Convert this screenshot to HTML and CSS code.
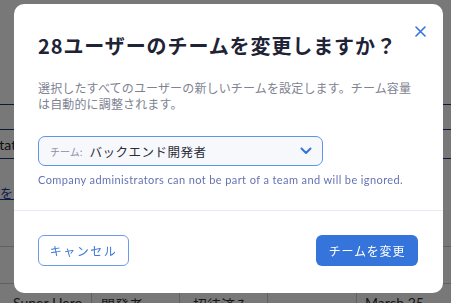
FILE: index.html
```html
<!DOCTYPE html>
<html>

<head>
    <meta charset="utf-8">
    <link rel="stylesheet" href="styles.css">
</head>

<body>
    <div class="page">
        <div class="toolbar"></div>
        <div class="bar"></div>
        <div class="thead">
            <span class="th">Status</span>
        </div>
        <div class="link-row">
            <a class="link">をすべて選択</a>
        </div>
        <div class="trow"></div>
        <div class="trow"></div>
        <div class="trow last">
            <span class="td c1">Super Hero</span>
            <span class="td c2">開発者</span>
            <span class="td c3">招待済み</span>
            <span class="td c4"></span>
            <span class="td c5">March 25</span>
        </div>
    </div>

    <div class="overlay"></div>

    <div class="modal">
        <button class="close" aria-label="close">
            <svg width="11" height="11" viewBox="0 0 11 11">
                <path d="M1 1 L10 10 M10 1 L1 10" stroke="#3574db" stroke-width="1.6" stroke-linecap="round" />
            </svg>
        </button>
        <div class="modal-body">
            <h2 class="title">28ユーザーのチームを変更しますか？</h2>
            <p class="desc">選択したすべてのユーザーの新しいチームを設定します。チーム容量は自動的に調整されます。</p>
            <div class="select">
                <span class="select-label">チーム:</span>
                <span class="select-value">バックエンド開発者</span>
                <svg class="chevron" width="12" height="8" viewBox="0 0 12 8">
                    <path d="M1.5 1.5 L6 6 L10.5 1.5" fill="none" stroke="#3574db" stroke-width="2" stroke-linecap="round" stroke-linejoin="round" />
                </svg>
            </div>
            <p class="hint">Company administrators can not be part of a team and will be ignored.</p>
        </div>
        <div class="modal-footer">
            <button class="btn btn-outline">キャンセル</button>
            <button class="btn btn-primary">チームを変更</button>
        </div>
    </div>
</body>

</html>
```

FILE: styles.css
```css
* {
    box-sizing: border-box;
}

html,
body {
    margin: 0;
    padding: 0;
    width: 100%;
    height: 100%;
    overflow: hidden;
}

body {
    font-family: "Noto Sans CJK JP", "Noto Sans", sans-serif;
    background: #fff;
}

/* page behind the dialog */
.page {
    width: 100%;
    height: 100%;
    color: #222;
    font-size: 13px;
}

.toolbar {
    height: 104px;
}

.bar {
    height: 26px;
    border-top: 1px solid #1d3a7a;
    border-bottom: 1px solid #1d3a7a;
}

.thead {
    height: 29px;
    display: flex;
    align-items: center;
    border-bottom: 1px solid #1d3a7a;
}

.th {
    margin-left: -8px;
    font-family: "Lato", sans-serif;
    font-size: 14px;
}

.link-row {
    height: 51px;
    display: flex;
    align-items: center;
    padding-top: 16px;
}

.link {
    color: #1d3a9a;
    text-decoration: underline;
    font-size: 13px;
}

.trow {
    height: 37px;
    border-bottom: 1px solid #ccc;
}

.trow.last {
    display: grid;
    grid-template-columns: 92px 88px 88px 89px 1fr;
    border-bottom: none;
}

.td {
    padding: 10px 0 0 13px;
    border-right: 1px solid #ccc;
    color: #333;
    font-size: 14px;
    white-space: nowrap;
    overflow: hidden;
}

.td.c1,
.td.c5 {
    font-family: "Lato", sans-serif;
}

.td.c2 {
    padding-left: 9px;
}

.td.c5 {
    border-right: none;
    padding-left: 8px;
}

.overlay {
    position: fixed;
    top: 0;
    left: 0;
    width: 100%;
    height: 100%;
    background: rgba(0, 0, 0, 0.53);
}

/* dialog */
.modal {
    position: fixed;
    top: 4px;
    left: 14px;
    width: 429px;
    height: 289px;
    background: #fff;
    border-radius: 10px;
    display: flex;
    flex-direction: column;
}

.close {
    position: absolute;
    top: 22px;
    right: 17px;
    border: none;
    background: none;
    padding: 0;
    width: 11px;
    height: 11px;
    display: flex;
}

.modal-body {
    padding: 28px 24px 0 24px;
    border-bottom: 1px solid #e8eaf6;
    height: 207px;
}

.title {
    margin: 0;
    font-size: 20px;
    line-height: 28px;
    font-weight: 700;
    letter-spacing: 0.9px;
    color: #1e2336;
}

.desc {
    margin: 20px 0 0 0;
    font-size: 12px;
    line-height: 16px;
    letter-spacing: 0.15px;
    color: #7e8291;
}

.select {
    margin-top: 24px;
    width: 285px;
    height: 30px;
    border: 1.5px solid #5f93e8;
    border-radius: 7px;
    background: #f7f8fc;
    display: flex;
    align-items: center;
    padding: 0 10px 0 11px;
}

.select-label {
    font-size: 10px;
    color: #8a8fa6;
    margin-right: 7px;
}

.select-value {
    font-size: 12.5px;
    color: #2a2d38;
    letter-spacing: 0.5px;
}

.chevron {
    margin-left: auto;
}

.hint {
    margin: 7px 0 0 0;
    font-family: "Lato", sans-serif;
    font-size: 11px;
    line-height: 14px;
    letter-spacing: 0.4px;
    color: #6572b4;
}

.modal-footer {
    display: flex;
    justify-content: space-between;
    padding: 24px 25px 0 24px;
}

.btn {
    height: 31px;
    border-radius: 6px;
    font-family: "Noto Sans CJK JP", sans-serif;
    font-size: 12px;
    letter-spacing: 1.5px;
    cursor: pointer;
}

.btn-outline {
    width: 91px;
    background: #fff;
    border: 1.5px solid #6a9be8;
    color: #3f77d8;
}

.btn-primary {
    width: 102px;
    background: #3574db;
    border: none;
    color: #fff;
    letter-spacing: 0.8px;
}
```
